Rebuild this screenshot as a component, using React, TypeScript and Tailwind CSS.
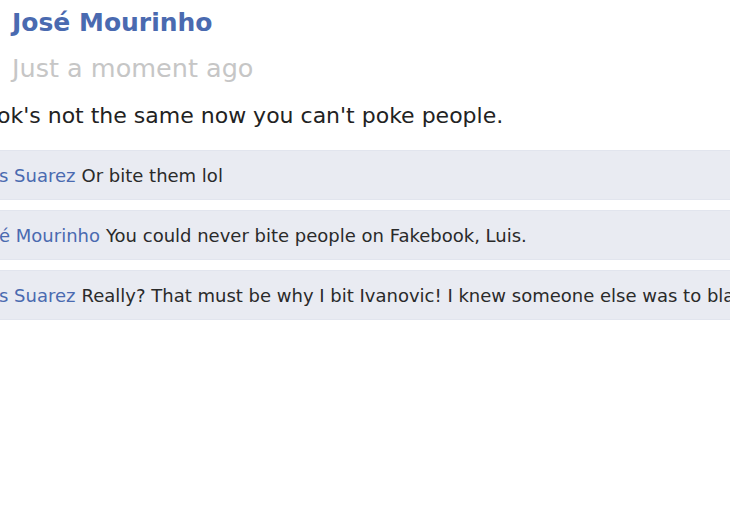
import React from 'react';

interface Comment {
  author: string;
  text: string;
}

const comments: Comment[] = [
  { author: 's Suarez', text: 'Or bite them lol' },
  { author: 'é Mourinho', text: 'You could never bite people on Fakebook, Luis.' },
  { author: 's Suarez', text: 'Really? That must be why I bit Ivanovic! I knew someone else was to blame' },
];

export default function App() {
  return (
    <div
      className="w-[730px] h-[510px] bg-white overflow-hidden"
      style={{ fontFamily: '"DejaVu Sans", "Liberation Sans", sans-serif' }}
    >
      <div className="pl-[12px] pt-[8px]">
        <div className="text-[25px] leading-[30px] font-bold text-[#4a6ab0]">José Mourinho</div>
        <div className="mt-[15px] text-[25.5px] leading-[30px] text-[#c6c6c6]">Just a moment ago</div>
      </div>
      <div className="mt-[18px] -ml-[3px] text-[22px] leading-[30px] text-[#222] whitespace-nowrap">
        ok's not the same now you can't poke people.
      </div>
      <div className="mt-[19px] flex flex-col gap-[10px]">
        {comments.map((c, i) => (
          <div
            key={i}
            className="h-[50px] bg-[#e9ebf2] border-y border-[#e2e5ee] flex items-center whitespace-nowrap overflow-hidden text-[18px] text-[#2a2a2a]"
          >
            <span className="-ml-[1px] text-[#4a6ab0]">{c.author}</span>
            <span className="ml-[6px]">{c.text}</span>
          </div>
        ))}
      </div>
    </div>
  );
}
